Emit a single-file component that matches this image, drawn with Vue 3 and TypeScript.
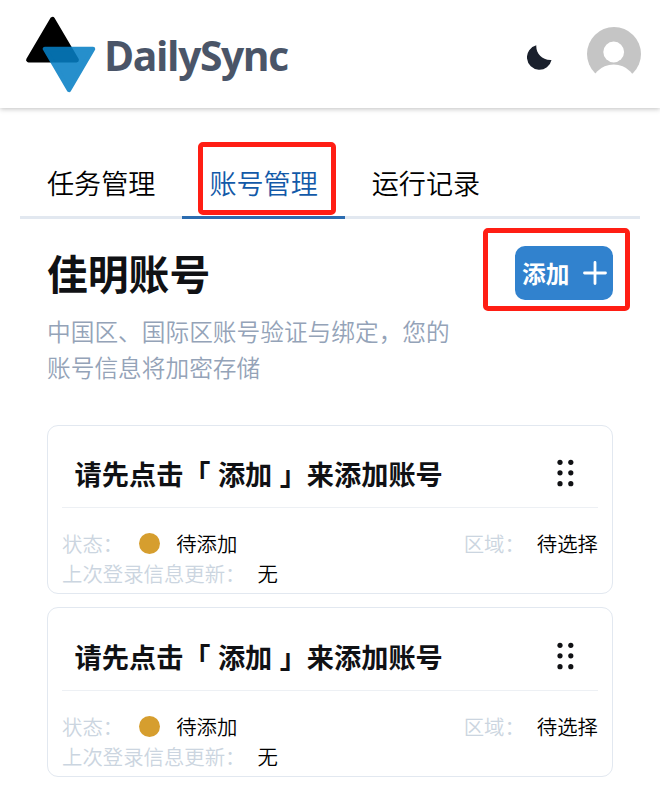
<script setup lang="ts">
import { ref } from 'vue'

interface Account {
  id: number
  title: string
  status: string
  region: string
  updated: string
}

const tabs: string[] = ['任务管理', '账号管理', '运行记录']
const active = ref(1)
const accounts: Account[] = [1, 2].map((id) => ({
  id,
  title: '请先点击「 添加 」来添加账号',
  status: '待添加',
  region: '待选择',
  updated: '无',
}))
const dots = [
  [3, 3.3], [13.8, 3.3], [3, 13.8], [13.8, 13.8], [3, 24.7], [13.8, 24.7],
]
</script>

<template>
  <div class="page">
    <header class="header">
      <svg class="logo" width="72" height="78" viewBox="0 0 72 78">
        <path d="M27.500 4.200 L3.500 45 H51.500 Z" fill="#000" stroke="#000" stroke-width="4.800" stroke-linejoin="round" />
        <path d="M20 33.900 H68 L44 74.800 Z" fill="#067fc5" stroke="#067fc5" stroke-width="4.500" stroke-linejoin="round" opacity=".87" />
      </svg>
      <span class="brand">DailySync</span>
      <svg class="moon" width="25" height="26" viewBox="0 0 25 26">
        <path d="M9.300 .3C8.800 8 15 15.500 24.500 14.900A12.400 12.400 0 1 1 9.300 .3Z" fill="#1a202c" />
      </svg>
      <svg class="avatar" width="54" height="54" viewBox="0 0 54 54">
        <circle cx="27" cy="27" r="27" fill="#c5c5c5" />
        <circle cx="26.700" cy="25" r="10.400" fill="#fff" />
        <circle cx="26.700" cy="61" r="23.500" fill="#fff" />
      </svg>
    </header>

    <nav class="tabs">
      <button
        v-for="(tab, i) in tabs"
        :key="tab"
        class="tab"
        :class="{ active: i === active }"
        @click="active = i"
      >{{ tab }}</button>
    </nav>

    <main class="content">
      <section class="intro">
        <div class="intro-text">
          <h1>佳明账号</h1>
          <p>中国区、国际区账号验证与绑定，您的账号信息将加密存储</p>
        </div>
        <button class="add">
          添加
          <svg width="24" height="24" viewBox="0 0 24 24">
            <path d="M12 1.500V22.500M1.500 12H22.500" stroke="#fff" stroke-width="2.800" stroke-linecap="round" />
          </svg>
        </button>
      </section>

      <article v-for="a in accounts" :key="a.id" class="card">
        <div class="card-head">
          <h2>{{ a.title }}</h2>
          <svg width="17" height="28" viewBox="0 0 17 28">
            <circle v-for="(d, i) in dots" :key="i" :cx="d[0]" :cy="d[1]" r="2.600" fill="#101114" />
          </svg>
        </div>
        <div class="row">
          <span class="label">状态：</span>
          <i class="dot"></i>
          <span>{{ a.status }}</span>
          <span class="label region">区域：</span>
          <span class="value">{{ a.region }}</span>
        </div>
        <div class="row">
          <span class="label">上次登录信息更新：</span>
          <span class="value">{{ a.updated }}</span>
        </div>
      </article>
    </main>

    <div class="mark mark-tab"></div>
    <div class="mark mark-add"></div>
  </div>
</template>

<style>
body {
  background: #fff;
}
</style>

<style scoped>
.page {
  position: relative;
  box-sizing: border-box;
  width: 660px;
  height: 791px;
  overflow: hidden;
  background: #fff;
  color: #101114;
  font-family: 'Noto Sans CJK SC', sans-serif;
}
.page * {
  box-sizing: border-box;
}
svg {
  display: block;
  flex: none;
  fill: none;
}
button {
  border: 0;
  margin: 0;
  background: none;
  font-family: inherit;
}
.header {
  display: flex;
  align-items: center;
  height: 108px;
  padding: 0 19px 0 25px;
  box-shadow: 0 1px 5px rgba(0, 0, 0, 0.25);
}
.brand {
  margin: 2px 0 0 7px;
  color: #4a5568;
  font: 700 40.8px/56px 'Open Sans', 'Noto Sans', sans-serif;
  letter-spacing: -1.4px;
}
.moon {
  margin: 8px 35.500px 0 auto;
}
.tabs {
  display: flex;
  height: 69px;
  margin: 42px 20px 0;
  border-bottom: 3px solid #e2e8f0;
}
.tab {
  height: 69px;
  padding: 0 27px;
  border-bottom: 3px solid transparent;
  color: #000;
  font-size: 27.1px;
  font-weight: 350;
  line-height: 66px;
}
.tab.active {
  border-color: #2b6cb0;
  color: #1259a8;
}
.content {
  padding: 27px 47px 0;
}
.intro {
  display: flex;
  justify-content: space-between;
  align-items: flex-start;
  height: 179px;
}
.intro-text {
  width: 408px;
}
h1 {
  margin: 0;
  font-size: 40.8px;
  font-weight: 700;
  line-height: 54px;
}
p {
  margin: 13px 0 0;
  color: #94a3b8;
  font-size: 23.7px;
  font-weight: 350;
  line-height: 36px;
}
.add {
  display: flex;
  align-items: center;
  justify-content: space-between;
  width: 98px;
  height: 54px;
  padding: 0 6px 0 7px;
  border-radius: 10px;
  background: #3182ce;
  color: #fff;
  font-size: 23.700px;
  font-weight: 700;
}
.card {
  height: 169px;
  margin-bottom: 13px;
  padding: 0 14px;
  border: 1px solid #e2e8f0;
  border-radius: 11px;
}
.card + .card {
  height: 170px;
}
.card-head {
  display: flex;
  align-items: center;
  justify-content: space-between;
  height: 82px;
  margin-bottom: 20px;
  padding: 13px 24.500px 0 12.600px;
  border-bottom: 1px solid #edf0f4;
}
.card + .card .card-head {
  height: 83px;
}
h2 {
  margin: 0;
  font-size: 27.2px;
  font-weight: 700;
  line-height: 36px;
  word-spacing: 1.2px;
}
.row {
  display: flex;
  align-items: center;
  height: 30px;
  color: #000;
  font-size: 20.4px;
  font-weight: 350;
  line-height: 30px;
  white-space: nowrap;
}
.label {
  color: #cbd5e0;
}
.value {
  margin-left: 12px;
}
.dot {
  width: 21px;
  height: 21px;
  margin: 0 16px;
  border-radius: 50%;
  background: #d69e2e;
}
.region {
  margin-left: auto;
}
.mark {
  position: absolute;
  border: 5px solid #ff1e14;
  border-radius: 5px;
}
.mark-tab {
  left: 198px;
  top: 142px;
  width: 138px;
  height: 73px;
}
.mark-add {
  left: 483px;
  top: 228px;
  width: 147px;
  height: 83px;
}
</style>
